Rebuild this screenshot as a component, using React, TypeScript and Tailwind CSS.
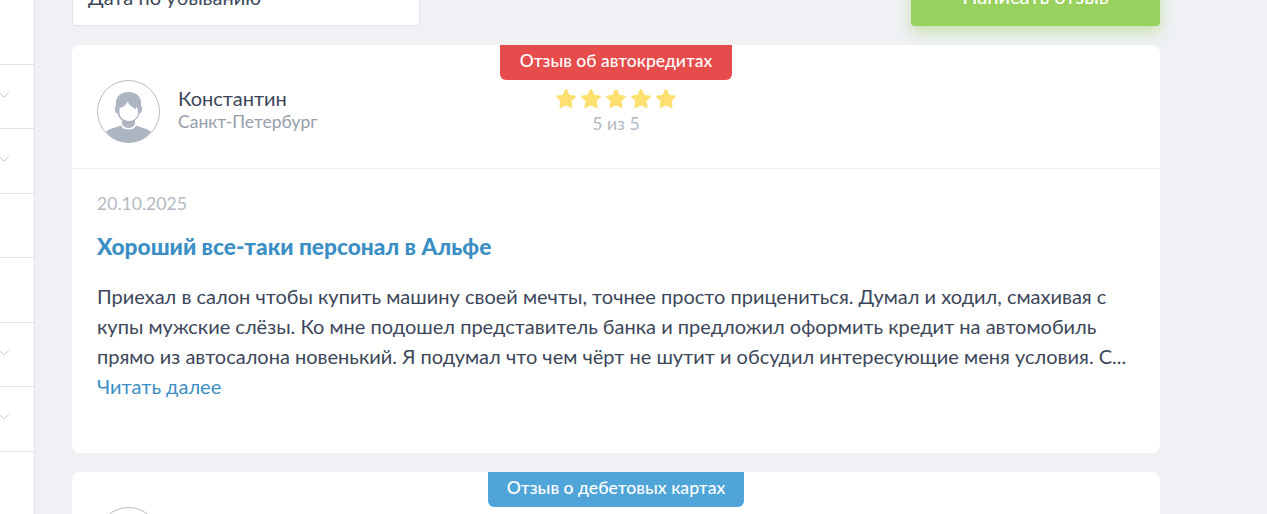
import { ChevronDown } from "lucide-react";

const sideRows = [
  { h: "h-[65px]", arrow: false },
  { h: "h-[64px]", arrow: true },
  { h: "h-[65px]", arrow: true },
  { h: "h-[64px]", arrow: false },
  { h: "h-[65px]", arrow: false },
  { h: "h-[64px]", arrow: true },
  { h: "h-[65px]", arrow: true },
];

function Avatar() {
  return (
    <svg width="63" height="63" viewBox="0 0 63 63" className="mt-[1px] shrink-0">
      <circle cx="31.500" cy="31.500" r="31" fill="#fff" stroke="#b4bac6" strokeWidth="1" />
      {/* shoulders */}
      <path d="M9 52c2-3 9-4.500 15-6.500 1.500 3 4 4 7.500 4s6-1 7.500-4c6 2 12.500 3.500 15 6.500-5.500 6.500-13.500 10.500-22.500 10.500S14.500 58.500 9 52z" fill="#aeb5c2" />
      {/* neck */}
      <path d="M25 38h13v6c-1 2.500-3.500 4-6.500 4S26 46.500 25 44z" fill="#aeb5c2" />
      {/* hair */}
      <path d="M19 26c-1-9 4-14 12.500-14S45 17 44 26c1 .5 1.500 2 1 4-.4 2-1.200 3.500-2.500 3.500-1.500 6-6.500 9-11 9s-9.500-3-11-9c-1.300 0-2.100-1.500-2.500-3.500-.5-2 0-3.500 1-4z" fill="#aeb5c2" />
      {/* face and fringe */}
      <path d="M22.500 28c3-.5 6-2 8-6.500 1.500 3 3 5 6 6l1.500 2.500 1-2.500 1.500.5.500 5c0 5-5 8-9 8s-9.500-3-9.500-8z" fill="#fff" />
    </svg>
  );
}

function Star() {
  return (
    <svg width="22" height="22" viewBox="0 0 22 22" className="shrink-0">
      <path
        d="M11 2.500l2.600 5.400 5.900.8-4.300 4.100 1.100 5.900L11 15.800l-5.300 2.900 1.100-5.900-4.300-4.100 5.900-.8z"
        fill="#ffdf70"
        stroke="#ffdf70"
        strokeWidth="2.500"
        strokeLinejoin="round"
      />
    </svg>
  );
}

export default function App() {
  return (
    <div className="h-[514px] w-full overflow-hidden bg-[#eff1f4] font-['Lato','Liberation_Sans',sans-serif]">
      <div className="flex h-full items-start">
        {/* Filter sidebar, cut off on the left */}
        <aside className="h-full w-[35px] shrink-0 border-r border-[#dfe2e7] bg-white">
          {sideRows.map((row, i) => (
            <div key={i} className={`${row.h} flex items-center border-b border-[#dfe2e7]`}>
              {row.arrow && <ChevronDown size={18} strokeWidth={1} color="#a9b0bd" className="-ml-[5px] -mt-[4px]" />}
            </div>
          ))}
        </aside>

        <main className="ml-[37px] w-[1088px] shrink-0">
          {/* Sort select and write button, scrolled partly out of view */}
          <div className="-mt-[24px] flex items-start justify-between">
            <div className="flex h-[50px] w-[348px] items-center justify-between rounded border border-[#dfe2e7] bg-white pl-[15px] pr-[16px] text-[20px] text-[#3c4659]">
              <span className="-mt-[8px]">Дата по убыванию</span>
              <ChevronDown size={14} strokeWidth={1.5} color="#3c4659" className="-mt-[14px]" />
            </div>
            <div className="flex h-[50px] w-[249px] items-center justify-center rounded bg-[#98d15d] pb-[10px] text-[20px] font-medium text-white shadow-[0_6px_14px_rgba(152,209,93,0.45)]">
              Написать отзыв
            </div>
          </div>

          {/* First review */}
          <article className="relative mt-[19px] h-[408px] rounded-lg bg-white">
            <div className="absolute left-[428px] top-0 flex h-[35px] w-[232px] items-center justify-center rounded-b-md bg-[#e64c4c] pb-[3px] text-[17.500px] font-medium text-white">
              Отзыв об автокредитах
            </div>
            <header className="relative flex h-[124px] items-center border-b border-[#eceef2] pl-[25px] pt-[9px]">
              <Avatar />
              <div className="ml-[18px] -mt-[6px]">
                <div className="text-[20px] leading-[26px] text-[#3c4659]">Константин</div>
                <div className="text-[17.500px] leading-[21px] text-[#979eac]">Санкт-Петербург</div>
              </div>
              <div className="absolute left-[483px] top-[43px] flex w-[122px] flex-col items-center">
                <div className="flex w-[122px] justify-between">
                  <Star />
                  <Star />
                  <Star />
                  <Star />
                  <Star />
                </div>
                <div className="mt-[3px] text-[17.600px] leading-[22px] text-[#b3b9c4]">5 из 5</div>
              </div>
            </header>
            <div className="pl-[25px] pr-[30px] pt-[24px]">
              <div className="text-[17.600px] leading-[22px] text-[#b3b9c4]">20.10.2025</div>
              <h3 className="mt-[18px] text-[22.700px] font-black leading-[28px] text-[#3b8fc4]">
                Хороший все-таки персонал в Альфе
              </h3>
              <p className="mt-[20px] whitespace-nowrap text-[20px] leading-[30px] text-[#3c4659]">
                Приехал в салон чтобы купить машину своей мечты, точнее просто прицениться. Думал и ходил, смахивая с
                <br />
                купы мужские слёзы. Ко мне подошел представитель банка и предложил оформить кредит на автомобиль
                <br />
                прямо из автосалона новенький. Я подумал что чем чёрт не шутит и обсудил интересующие меня условия. С...
                <br />
                <span className="text-[#3b8fc4]">Читать далее</span>
              </p>
            </div>
          </article>

          {/* Second review, cut off by the window */}
          <article className="relative mt-[19px] h-[200px] rounded-lg bg-white pl-[25px] pt-[34px]">
            <div className="absolute left-[416px] top-0 flex h-[35px] w-[256px] items-center justify-center rounded-b-md bg-[#4fa5d8] pb-[3px] text-[17.600px] font-medium text-white">
              Отзыв о дебетовых картах
            </div>
            <Avatar />
          </article>
        </main>
      </div>
    </div>
  );
}
